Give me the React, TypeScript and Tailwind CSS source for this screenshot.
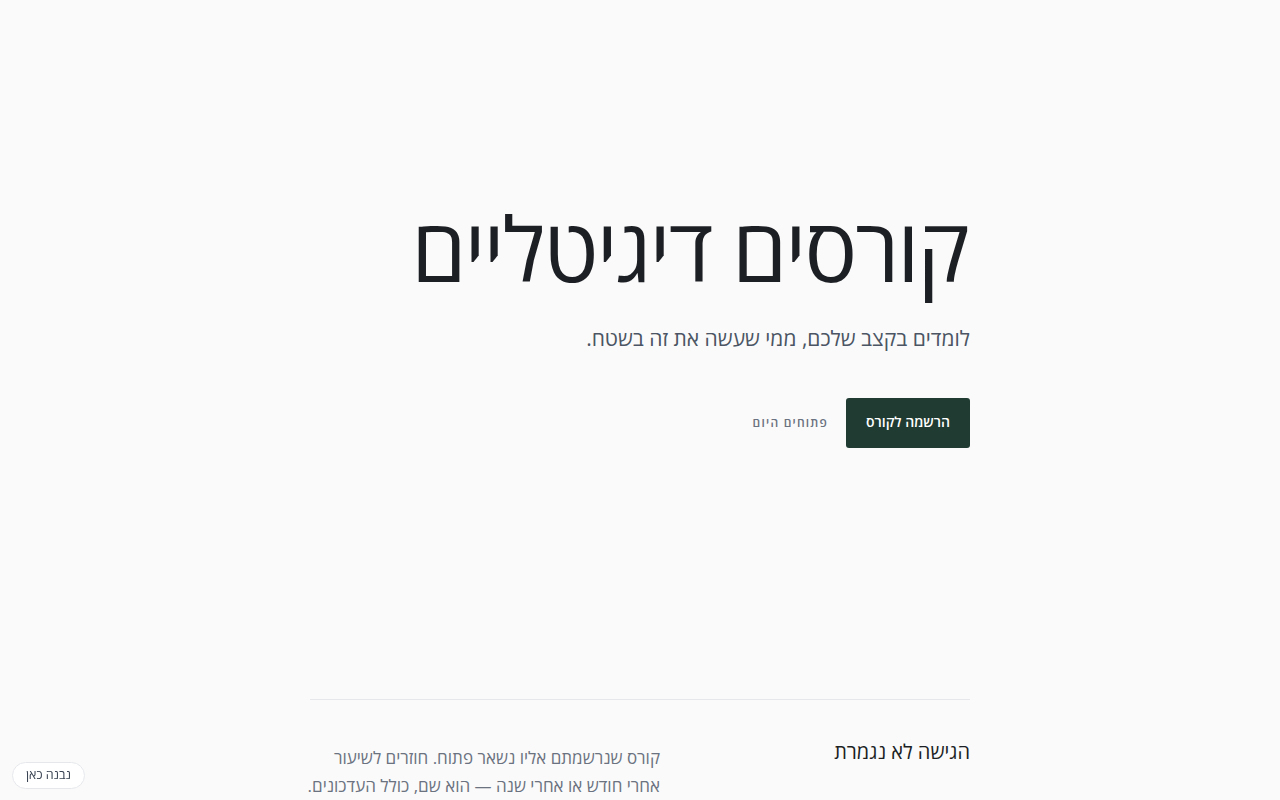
export default function App() {
  return (
    <div
      dir="rtl"
      className="min-h-screen bg-[#fafafa] text-[#1c1f24]"
      style={{ fontFamily: '"Open Sans", "Noto Sans", sans-serif' }}
    >
      <main className="mx-auto w-[660px]">
        {/* Hero */}
        <section className="pt-[200px] pb-[251px]">
          <h1 className="pr-[2px] text-[88px] leading-[1.1] font-normal tracking-[-0.022em]">קורסים דיגיטליים</h1>
          <p className="mt-[26px] text-[21px] text-[#4b5563]">לומדים בקצב שלכם, ממי שעשה את זה בשטח.</p>
          <div className="mt-[44px] flex items-center gap-[18px]">
            <button className="h-[50px] rounded-[3px] bg-[#1f3b32] px-[20px] pb-[3px] text-[14px] font-semibold text-white">
              הרשמה לקורס
            </button>
            <span className="text-[12px] font-semibold tracking-[0.1em] text-[#6b7280]">פתוחים היום</span>
          </div>
        </section>

        {/* Section */}
        <section className="border-t border-[#e5e7eb] pt-[37px]">
          <div className="grid grid-cols-[260px_1fr] gap-[50px]">
            <h2 className="text-[20px] font-normal">הגישה לא נגמרת</h2>
            <p className="mt-[7px] whitespace-nowrap text-[17px] leading-[28px] text-[#6b7280]">
              קורס שנרשמתם אליו נשאר פתוח. חוזרים לשיעור
              <br />
              אחרי חודש או אחרי שנה — הוא שם, כולל העדכונים.
            </p>
          </div>
        </section>
      </main>

      <div className="fixed bottom-[11px] left-[12px] flex h-[27px] items-center rounded-full border border-[#e5e7eb] bg-white px-[13px] text-[12.5px] text-[#374151]">
        נבנה כאן
      </div>
    </div>
  )
}
